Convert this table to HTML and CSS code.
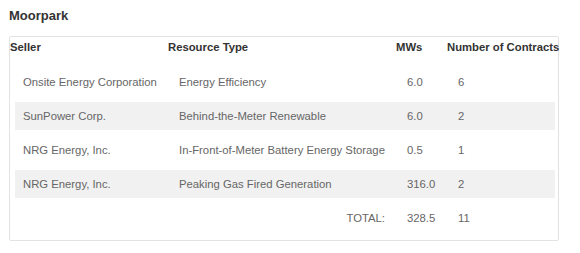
FILE: index.html
```html
<!DOCTYPE html>
<html>
<head>
<meta charset="utf-8">
<link rel="stylesheet" href="styles.css">
</head>
<body>
<div class="page">
  <h2 class="title">Moorpark</h2>
  <div class="box">
    <div class="head">
      <div>Seller</div>
      <div>Resource Type</div>
      <div>MWs</div>
      <div>Number of Contracts</div>
    </div>
    <div class="rows">
      <div class="row">
        <div>Onsite Energy Corporation</div>
        <div>Energy Efficiency</div>
        <div>6.0</div>
        <div>6</div>
      </div>
      <div class="row alt">
        <div>SunPower Corp.</div>
        <div>Behind-the-Meter Renewable</div>
        <div>6.0</div>
        <div>2</div>
      </div>
      <div class="row">
        <div>NRG Energy, Inc.</div>
        <div>In-Front-of-Meter Battery Energy Storage</div>
        <div>0.5</div>
        <div>1</div>
      </div>
      <div class="row alt">
        <div>NRG Energy, Inc.</div>
        <div>Peaking Gas Fired Generation</div>
        <div>316.0</div>
        <div>2</div>
      </div>
      <div class="row total">
        <div class="total-label">TOTAL:</div>
        <div>328.5</div>
        <div>11</div>
      </div>
    </div>
  </div>
</div>
</body>
</html>
```
FILE: styles.css
```css
* { box-sizing: border-box; }
html, body { margin: 0; padding: 0; background: #fff; }
body {
  font-family: "Liberation Sans", Arial, sans-serif;
  font-size: 11.3px;
  color: #333;
}
.page { padding: 0 0 0 9px; width: 567px; }
.title {
  margin: 0;
  padding-top: 8px;
  font-size: 13px;
  line-height: 15px;
  font-weight: bold;
  color: #333;
  height: 36px;
}
.box {
  width: 550px;
  border: 1px solid #e2e2e2;
  border-radius: 2px;
  padding: 0 3px 8px 0;
}
.head {
  display: grid;
  grid-template-columns: 158px 228px 51px 1fr;
  font-weight: bold;
  color: #333;
  line-height: 14px;
  padding-top: 3px;
  height: 31px;
  white-space: nowrap;
}
.rows {
  display: flex;
  flex-direction: column;
  gap: 6px;
  margin-left: 5px;
}
.row {
  display: grid;
  grid-template-columns: 156px 228px 51px 1fr;
  align-items: center;
  height: 28px;
  padding-left: 8px;
  color: #666;
  white-space: nowrap;
}
.row.alt { background: #f1f1f1; }
.row.total { grid-template-columns: 384px 51px 1fr; }
.total-label { text-align: right; padding-right: 22px; }
```
